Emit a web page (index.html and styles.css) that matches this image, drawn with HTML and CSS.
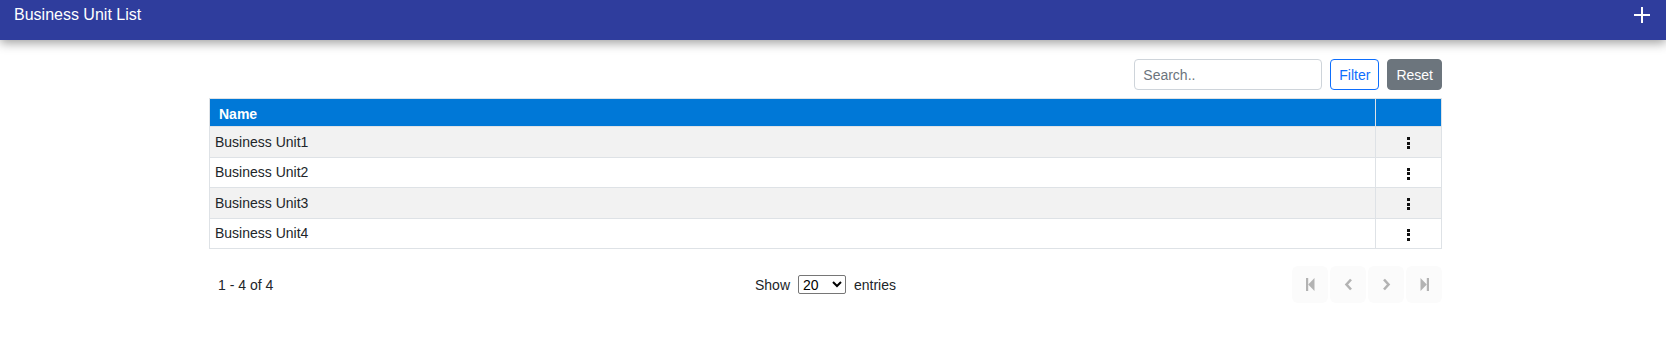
FILE: index.html
```html
<!DOCTYPE html>
<html lang="en">
<head>
<meta charset="utf-8">
<title>Business Unit List</title>
<link rel="stylesheet" href="styles.css">
</head>
<body>
<header class="topbar">
  <div class="topbar-title">Business Unit List</div>
  <button class="add-btn" aria-label="Add">
    <svg width="16" height="16" viewBox="0 0 16 16"><rect x="7" y="0" width="2" height="16" fill="#fff"/><rect x="0" y="7" width="16" height="2" fill="#fff"/></svg>
  </button>
</header>
<main class="content">
  <div class="toolbar">
    <input class="search" type="text" placeholder="Search..">
    <button class="btn btn-filter">Filter</button>
    <button class="btn btn-reset">Reset</button>
  </div>
  <table class="grid">
    <thead>
      <tr><th class="col-name">Name</th><th class="col-act"></th></tr>
    </thead>
    <tbody>
      <tr><td>Business Unit1</td><td class="col-act"><span class="kebab"><i></i><i></i><i></i></span></td></tr>
      <tr><td>Business Unit2</td><td class="col-act"><span class="kebab"><i></i><i></i><i></i></span></td></tr>
      <tr><td>Business Unit3</td><td class="col-act"><span class="kebab"><i></i><i></i><i></i></span></td></tr>
      <tr><td>Business Unit4</td><td class="col-act"><span class="kebab"><i></i><i></i><i></i></span></td></tr>
    </tbody>
  </table>
  <div class="pager">
    <div class="pager-info">1 - 4 of 4</div>
    <div class="pager-size">Show <select class="size-select"><option>20</option><option>50</option><option>100</option></select> entries</div>
    <div class="pager-nav">
      <button class="nav-btn" aria-label="First"><svg width="9" height="13" viewBox="0 0 9 13"><rect x="0" y="0" width="2.2" height="13" fill="#b3b3b3"/><polygon points="8.5,0 2.2,6.5 8.5,13" fill="#b3b3b3"/></svg></button>
      <button class="nav-btn" aria-label="Previous"><svg width="9" height="13" viewBox="0 0 9 13"><polyline points="7,1.5 2.5,6.5 7,11.5" fill="none" stroke="#b3b3b3" stroke-width="2.6"/></svg></button>
      <button class="nav-btn" aria-label="Next"><svg width="9" height="13" viewBox="0 0 9 13"><polyline points="2,1.5 6.5,6.5 2,11.5" fill="none" stroke="#b3b3b3" stroke-width="2.6"/></svg></button>
      <button class="nav-btn" aria-label="Last"><svg width="9" height="13" viewBox="0 0 9 13"><polygon points="0.5,0 6.8,6.5 0.5,13" fill="#b3b3b3"/><rect x="6.8" y="0" width="2.2" height="13" fill="#b3b3b3"/></svg></button>
    </div>
  </div>
</main>
</body>
</html>
```

FILE: styles.css
```css
* { box-sizing: border-box; }
body {
  margin: 0;
  font-family: "Liberation Sans", Arial, sans-serif;
  font-size: 14px;
  color: #212529;
  background: #fff;
}
.topbar {
  height: 40px;
  background: #2f3d9d;
  display: flex;
  justify-content: space-between;
  align-items: flex-start;
  padding: 0 16px 0 14px;
  box-shadow: 0 3px 10px rgba(0, 0, 0, 0.38);
  position: relative;
}
.topbar-title {
  color: #fff;
  font-size: 16px;
  line-height: 18px;
  padding-top: 6px;
}
.add-btn {
  background: none;
  border: 0;
  padding: 0;
  margin-top: 7px;
  width: 16px;
  height: 16px;
  display: flex;
}
.content {
  width: 1233px;
  margin-left: 209px;
  padding-top: 19px;
}
.toolbar {
  display: flex;
  justify-content: flex-end;
  gap: 8px;
  height: 31px;
}
.search {
  width: 188px;
  height: 31px;
  border: 1px solid #ced4da;
  border-radius: 4px;
  padding: 0 8px;
  font-family: inherit;
  font-size: 14px;
  color: #212529;
}
.search::placeholder { color: #6c757d; }
.btn {
  height: 31px;
  border-radius: 4px;
  padding: 0 8px;
  font-family: inherit;
  font-size: 14px;
  border: 1px solid transparent;
}
.btn-filter {
  background: #fff;
  border-color: #0d6efd;
  color: #0d6efd;
}
.btn-reset {
  background: #6c757d;
  border-color: #6c757d;
  color: #fff;
}
.grid {
  width: 100%;
  margin-top: 8px;
  border-collapse: collapse;
  border: 1px solid #dee2e6;
}
.grid th {
  background: #0078d7;
  color: #fff;
  font-weight: bold;
  text-align: left;
  height: 28px;
  padding: 2px 9px 0;
  font-size: 14px;
}
.grid th.col-act { border-left: 1px solid #dee2e6; }
.grid td {
  height: 30.5px;
  padding: 0 5px;
  border-top: 1px solid #dee2e6;
}
.grid tbody tr:nth-child(odd) td { background: #f2f2f2; }
.col-act {
  width: 66px;
  text-align: center;
  border-left: 1px solid #dee2e6;
}
.kebab {
  display: inline-flex;
  flex-direction: column;
  gap: 1.5px;
  vertical-align: middle;
}
.kebab i {
  display: block;
  width: 3px;
  height: 3px;
  background: #111;
}
.pager {
  display: grid;
  grid-template-columns: 1fr auto 1fr;
  align-items: center;
  margin-top: 17px;
}
.pager-info { padding-left: 9px; }
.pager-size {
  display: flex;
  align-items: center;
  gap: 8px;
}
.size-select {
  width: 48px;
  height: 19px;
  font-family: inherit;
  font-size: 14px;
  border: 1px solid #767676;
  border-radius: 2px;
  background: #fff;
  color: #000;
  padding: 0;
}
.pager-nav {
  display: flex;
  justify-content: flex-end;
  gap: 2px;
}
.nav-btn {
  width: 36px;
  height: 37px;
  border: 0;
  border-radius: 6px;
  background: #fbfbfb;
  display: flex;
  align-items: center;
  justify-content: center;
  padding: 0;
}
```
